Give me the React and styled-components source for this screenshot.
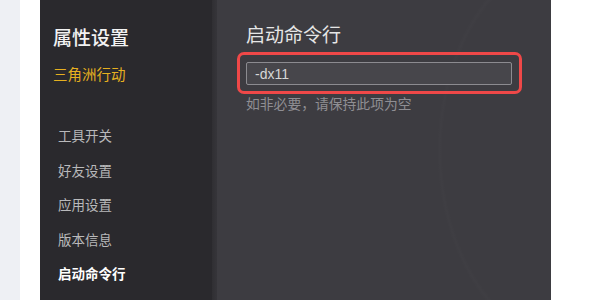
import React from "react";
import styled, { createGlobalStyle } from "styled-components";

const GlobalStyle = createGlobalStyle`
  html, body {
    margin: 0;
    padding: 0;
    background: #ffffff;
    font-family: "Noto Sans CJK SC", "Noto Sans", sans-serif;
  }
`;

const Page = styled.div`
  display: flex;
  width: 600px;
  height: 300px;
  overflow: hidden;
  background: #ffffff;
`;

const Strip = styled.div`
  width: 20px;
  background: #eef0f4;
`;

const Gap = styled.div`
  width: ${({ w }) => w}px;
  background: #ffffff;
`;

const Sidebar = styled.aside`
  display: flex;
  flex-direction: column;
  width: 172px;
  padding: 24px 0 0 13px;
  box-sizing: border-box;
  background: #2a292d;
`;

const SideTitle = styled.h2`
  margin: 0;
  font-size: 19px;
  line-height: 26px;
  font-weight: 500;
  color: #f2f2f2;
`;

const GameName = styled.div`
  margin-top: 14px;
  font-size: 14.5px;
  line-height: 20px;
  color: #e6b020;
`;

const Menu = styled.ul`
  list-style: none;
  margin: 34px 0 0;
  padding: 0 0 0 5px;
`;

const MenuItem = styled.li`
  font-size: 13.5px;
  line-height: 34.5px;
  height: 34.5px;
  color: ${({ active }) => (active ? "#ffffff" : "#b9b9bb")};
  font-weight: ${({ active }) => (active ? 700 : 400)};
`;

const Divider = styled.div`
  width: 5px;
  background: linear-gradient(to right, #302f33, #36353a);
`;

const Panel = styled.section`
  flex: 1;
  padding: 21px 0 0 20px;
  box-sizing: border-box;
  background:
    radial-gradient(ellipse 140px 200px at 360px 150px, transparent 96%, rgba(255,255,255,0.012) 98%, transparent 100%),
    #3d3c41;
`;

const PanelTitle = styled.h3`
  margin: 0 0 0 9px;
  font-size: 19px;
  line-height: 26px;
  font-weight: 400;
  color: #e6e6e6;
`;

const Highlight = styled.div`
  margin-top: 5px;
  width: 285px;
  height: 42px;
  box-sizing: border-box;
  padding: 7px 7px 6px 6px;
  border: 3px solid #ef4848;
  border-radius: 7px;
`;

const Input = styled.div`
  display: flex;
  align-items: center;
  height: 23px;
  box-sizing: border-box;
  padding: 0 8px;
  border: 1.5px solid #8c8b90;
  border-radius: 2px;
  background: #47464b;
  font-family: "Liberation Sans", "Noto Sans CJK SC", sans-serif;
  font-size: 14px;
  color: #d6d6d6;
`;

const Hint = styled.p`
  margin: 0 0 0 9px;
  font-size: 13.8px;
  line-height: 18px;
  color: #8f8e93;
`;

const items = ["工具开关", "好友设置", "应用设置", "版本信息", "启动命令行"];

export default function App() {
  return (
    <>
      <GlobalStyle />
      <Page>
        <Strip />
        <Gap w={20} />
        <Sidebar>
          <SideTitle>属性设置</SideTitle>
          <GameName>三角洲行动</GameName>
          <Menu>
            {items.map((t, i) => (
              <MenuItem key={t} active={i === items.length - 1}>
                {t}
              </MenuItem>
            ))}
          </Menu>
        </Sidebar>
        <Divider />
        <Panel>
          <PanelTitle>启动命令行</PanelTitle>
          <Highlight>
            <Input>-dx11</Input>
          </Highlight>
          <Hint>如非必要，请保持此项为空</Hint>
        </Panel>
        <Gap w={49} />
      </Page>
    </>
  );
}
